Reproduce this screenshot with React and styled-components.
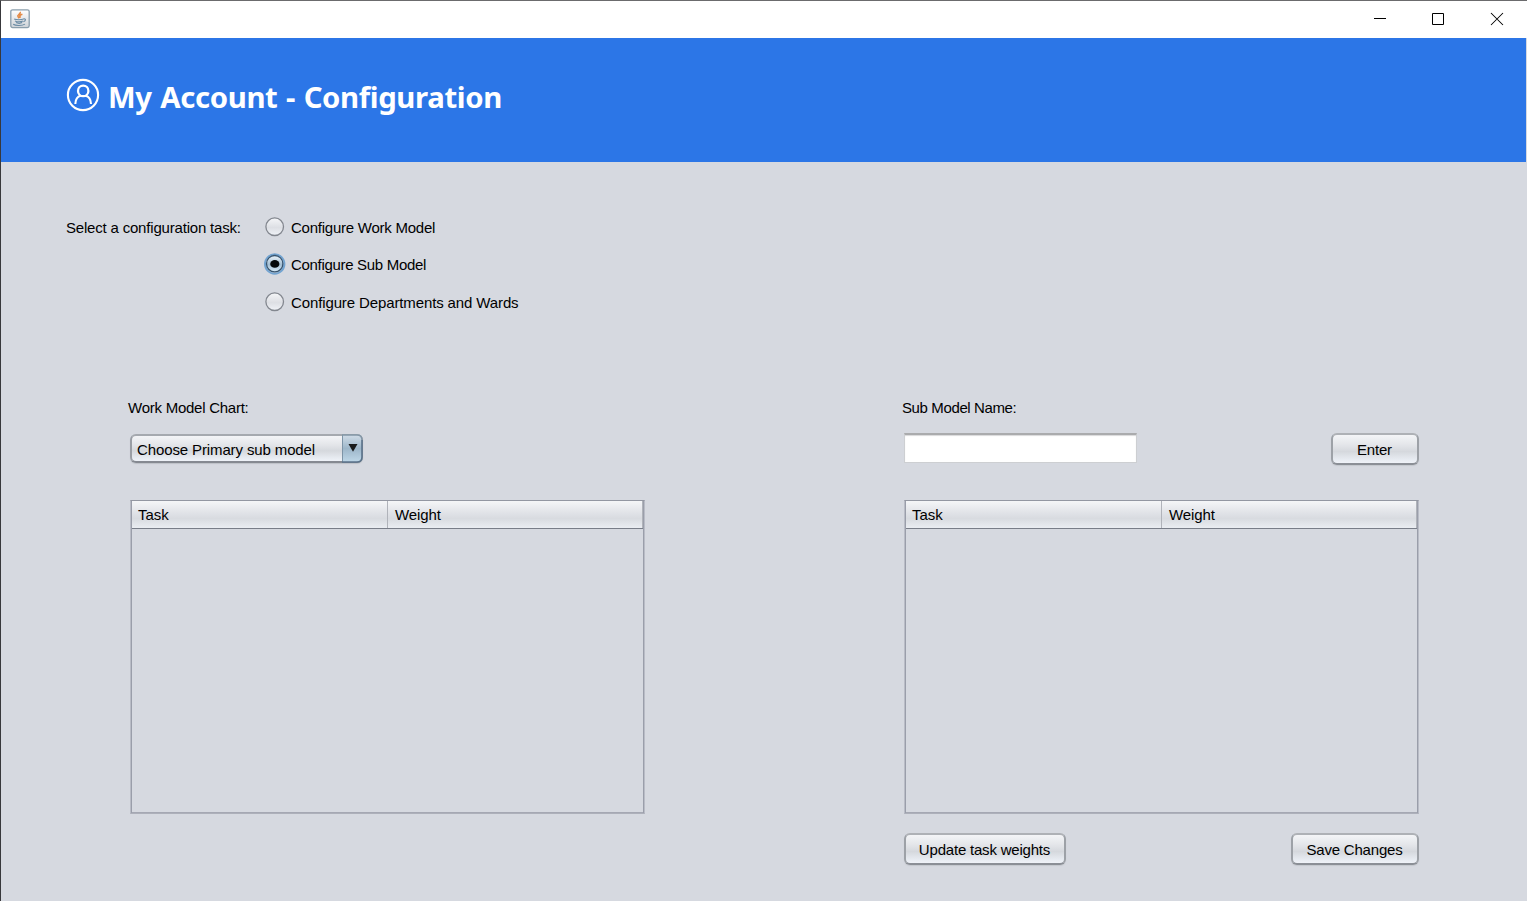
import React from "react";
import styled, { createGlobalStyle } from "styled-components";

const Global = createGlobalStyle`
  * { box-sizing: border-box; }
  body { margin: 0; background: #d6d9e0; overflow: hidden; }
`;

const Window = styled.div`
  width: 1527px;
  height: 901px;
  display: flex;
  flex-direction: column;
  border-top: 1px solid #6b6b6d;
  border-left: 1px solid #38383b;
  background: #d6d9e0;
  color: #000;
  font: 15px/18px "Liberation Sans", Arial, sans-serif;
  white-space: nowrap;
`;

const TitleBar = styled.div`
  height: 37px;
  flex: none;
  display: flex;
  justify-content: space-between;
  background: #fff;
  padding-left: 9px;
`;

const AppIcon = styled.svg`
  width: 20px;
  height: 20px;
  margin-top: 8px;
`;

const Controls = styled.div`
  display: flex;
`;

const Control = styled.svg`
  width: ${(p) => p.$w}px;
  height: 36px;
`;

const Banner = styled.header`
  height: 124px;
  flex: none;
  margin-right: 1px;
  padding: 38px 0 0 64px;
  display: flex;
  align-items: flex-start;
  background: #2c76e7;
  color: #fff;
`;

const AccountIcon = styled.svg`
  width: 36px;
  height: 38px;
  flex: none;
`;

const Title = styled.h1`
  margin: -1px 0 0 7px;
  font: 700 29.33px/44px "Noto Sans", "Open Sans", sans-serif;
  letter-spacing: -0.36px;
  word-spacing: 1.3px;
`;

const Text = styled.span`
  letter-spacing: ${(p) => p.$track || 0}px;
`;

const Chooser = styled.section`
  display: flex;
  padding: 47px 0 0 65px;
  height: 237px;
  flex: none;
`;

const ChooserLabel = styled.div`
  width: 198px;
  padding-top: 10px;
`;

const Options = styled.div`
  display: flex;
  flex-direction: column;
`;

const Option = styled.label`
  height: ${(p) => p.$h}px;
  display: flex;
  align-items: flex-start;
`;

const RadioMark = styled.svg`
  width: 22px;
  height: 22px;
  margin: 7px 5px 0 0;
`;

const OptionText = styled(Text)`
  padding-top: 10px;
`;

const Panels = styled.main`
  display: grid;
  grid-template-columns: 515px 515px;
  column-gap: 259px;
  padding-left: 129px;
`;

const Panel = styled.section`
  display: flex;
  flex-direction: column;
`;

const PanelLabel = styled.div`
  height: 34px;
  margin-left: -2px;
`;

const Tools = styled.div`
  height: 67px;
  display: flex;
  align-items: flex-start;
  justify-content: space-between;
`;

const metal = "linear-gradient(#f7f8fa 0%, #e3e5e9 38%, #d5d8dd 58%, #e5e9ef 80%, #f4f7fd 100%)";

const Combo = styled.div`
  width: 233px;
  height: 29px;
  margin-top: 1px;
  display: flex;
  justify-content: space-between;
  border: 2px solid;
  border-color: #a5a9af #9a9ea5 #858991;
  border-radius: 6px;
  background: ${metal} border-box;
  box-shadow: 0 1px 1px #bdc0c7;
`;

const ComboText = styled(Text)`
  padding: 5px 0 0 5px;
`;

const ComboArrow = styled.svg`
  width: 22px;
  height: 29px;
  margin: -2px -2px;
`;

const Field = styled.input`
  width: 233px;
  height: 30px;
  border: 1px solid #cdcfd2;
  border-top: 2px solid #aaabad;
  background: #fff;
  box-shadow: inset 0 1px 1px #d9d9da;
  outline: 0;
  font: inherit;
`;

const Button = styled.button`
  width: ${(p) => p.$w}px;
  height: 32px;
  padding: 2px 1px 0 0;
  border: 2px solid;
  border-color: #aeb1b6 #9da1a7 #8b8f96;
  border-radius: 6px;
  background: ${metal} border-box;
  box-shadow: 0 1px 1px #c4c7ce;
  color: #000;
  font: inherit;
`;

const Table = styled.div`
  height: 314px;
  border: 1px solid #b9bcc6;
  border-top-color: #9397a2;
  border-bottom-color: #adb0ba;
  padding: 0 1px;
  box-shadow: inset 1px 0 #9a9eaa, inset -1px 0 #9a9eaa, inset 0 -1px #a5a8b3;
`;

const TableHead = styled.div`
  height: 28px;
  display: grid;
  grid-template-columns: 256px 255px;
  border-bottom: 1px solid #787d88;
  background: linear-gradient(#f5f6f8 0%, #e0e2e7 45%, #d8dbe0 65%, #eaedf2 100%);
`;

const Column = styled.div`
  padding: 5px 0 0 ${(p) => (p.$first ? 6 : 7)}px;
  border-right: 1px solid #b0b3ba;
`;

const Actions = styled.div`
  display: flex;
  justify-content: space-between;
  padding-top: 19px;
`;

function Radio({ selected }) {
  const id = selected ? "radio-on" : "radio-off";
  return (
    <RadioMark viewBox="0 0 22 22">
      <defs>
        <linearGradient id={id} x2="0" y2="1">
          <stop stopColor={selected ? "#edf5fb" : "#f5f6f8"} />
          <stop offset=".55" stopColor={selected ? "#a5bfd3" : "#dddfe4"} />
          <stop offset="1" stopColor={selected ? "#d8ebf8" : "#f0f3f8"} />
        </linearGradient>
      </defs>
      {selected && <circle cx="10.7" cy="11" r="9.7" fill="none" stroke="#73a4d1" strokeWidth="2" />}
      <circle cx="10.7" cy="10.7" r={selected ? 8.2 : 8.8} fill={`url(#${id})`} stroke={selected ? "#36546f" : "#83878f"} strokeWidth="1.3" />
      {selected && <ellipse cx="10.8" cy="10.9" rx="4.6" ry="3.9" fill="#05080a" />}
    </RadioMark>
  );
}

function WorkTable() {
  return (
    <Table>
      <TableHead>
        <Column $first>Task</Column>
        <Column><Text $track={-0.1}>Weight</Text></Column>
      </TableHead>
    </Table>
  );
}

export default function App() {
  return (
    <>
      <Global />
      <Window>
        <TitleBar>
          <AppIcon viewBox="0 0 20 20">
            <defs>
              <linearGradient id="cup" x2="0" y2="1">
                <stop stopColor="#fff" />
                <stop offset="1" stopColor="#cdd2d7" />
              </linearGradient>
            </defs>
            <rect x=".8" y=".8" width="18.4" height="17.8" rx="1.8" fill="url(#cup)" stroke="#8a9eac" strokeWidth="1.3" />
            <path d="M10.2 2.8c1.2 2.2-3.6 2.8-2.2 4.8l1.3 1.6M12.4 5.2c-3 .8-3.2 1.8-1.8 3.4" fill="none" stroke="#e48a45" strokeWidth="1.6" />
            <path d="M4.2 10c2 1 7.2 1 9.2 0M5 11.9c2.3 1 6 .9 7.9.1M6 13.6c1.7.8 4.6.8 6.2 0M13.2 10c3-.8 3 1.8.2 2.6M3.2 15.3c2.5 1.7 9 1.6 11.8-.2" fill="none" stroke="#6a8ba4" strokeWidth="1.1" />
          </AppIcon>
          <Controls>
            <Control $w={58} viewBox="0 0 58 36"><path d="M23 17.5h12" stroke="#000" /></Control>
            <Control $w={59} viewBox="0 0 59 36"><path d="M23.5 12.5h11v11h-11z" fill="none" stroke="#000" /></Control>
            <Control $w={59} viewBox="0 0 59 36"><path d="m23 12 12 12m0-12-12 12" stroke="#000" strokeWidth="1.05" /></Control>
          </Controls>
        </TitleBar>
        <Banner>
          <AccountIcon viewBox="0 0 36 38" fill="none" stroke="#fff">
            <circle cx="18" cy="19" r="15.1" strokeWidth="2.1" />
            <ellipse cx="18.2" cy="14.9" rx="5.2" ry="5.3" strokeWidth="2.3" />
            <path d="M10.3 28c.2-4.5 2.2-7.5 5.5-8.2m4.7 0c3.3.7 5.3 3.7 5.5 8.2" strokeWidth="2.1" />
          </AccountIcon>
          <Title>My Account - Configuration</Title>
        </Banner>
        <Chooser>
          <ChooserLabel><Text $track={-0.19}>Select a configuration task:</Text></ChooserLabel>
          <Options>
            <Option $h={37}><Radio /><OptionText $track={-0.24}>Configure Work Model</OptionText></Option>
            <Option $h={38}><Radio selected /><OptionText $track={-0.31}>Configure Sub Model</OptionText></Option>
            <Option $h={37}><Radio /><OptionText $track={-0.12}>Configure Departments and Wards</OptionText></Option>
          </Options>
        </Chooser>
        <Panels>
          <Panel>
            <PanelLabel><Text $track={-0.25}>Work Model Chart:</Text></PanelLabel>
            <Tools>
              <Combo>
                <ComboText $track={-0.12}>Choose Primary sub model</ComboText>
                <ComboArrow viewBox="0 0 22 29">
                  <defs>
                    <linearGradient id="arrow" x2="0" y2="1">
                      <stop stopColor="#d0dce7" />
                      <stop offset=".5" stopColor="#9db6c9" />
                      <stop offset="1" stopColor="#bed7e8" />
                    </linearGradient>
                  </defs>
                  <path d="M1 1H16q5 0 5 5v17q0 5-5 5H1z" fill="url(#arrow)" />
                  <path d="M1.5 1v27" stroke="#7d94a7" />
                  <path d="M1 1H16q5 0 5 5" fill="none" stroke="#8396a6" strokeWidth="1.5" />
                  <path d="M21 6v17q0 5-5 5H1" fill="none" stroke="#5a728a" strokeWidth="1.6" />
                  <path d="M7.5 10h9L12 17.7z" fill="#181a1b" />
                </ComboArrow>
              </Combo>
            </Tools>
            <WorkTable />
          </Panel>
          <Panel>
            <PanelLabel><Text $track={-0.38}>Sub Model Name:</Text></PanelLabel>
            <Tools>
              <Field aria-label="Sub Model Name" />
              <Button $w={88}><Text $track={-0.2}>Enter</Text></Button>
            </Tools>
            <WorkTable />
            <Actions>
              <Button $w={162}><Text $track={-0.2}>Update task weights</Text></Button>
              <Button $w={128}><Text $track={-0.2}>Save Changes</Text></Button>
            </Actions>
          </Panel>
        </Panels>
      </Window>
    </>
  );
}
